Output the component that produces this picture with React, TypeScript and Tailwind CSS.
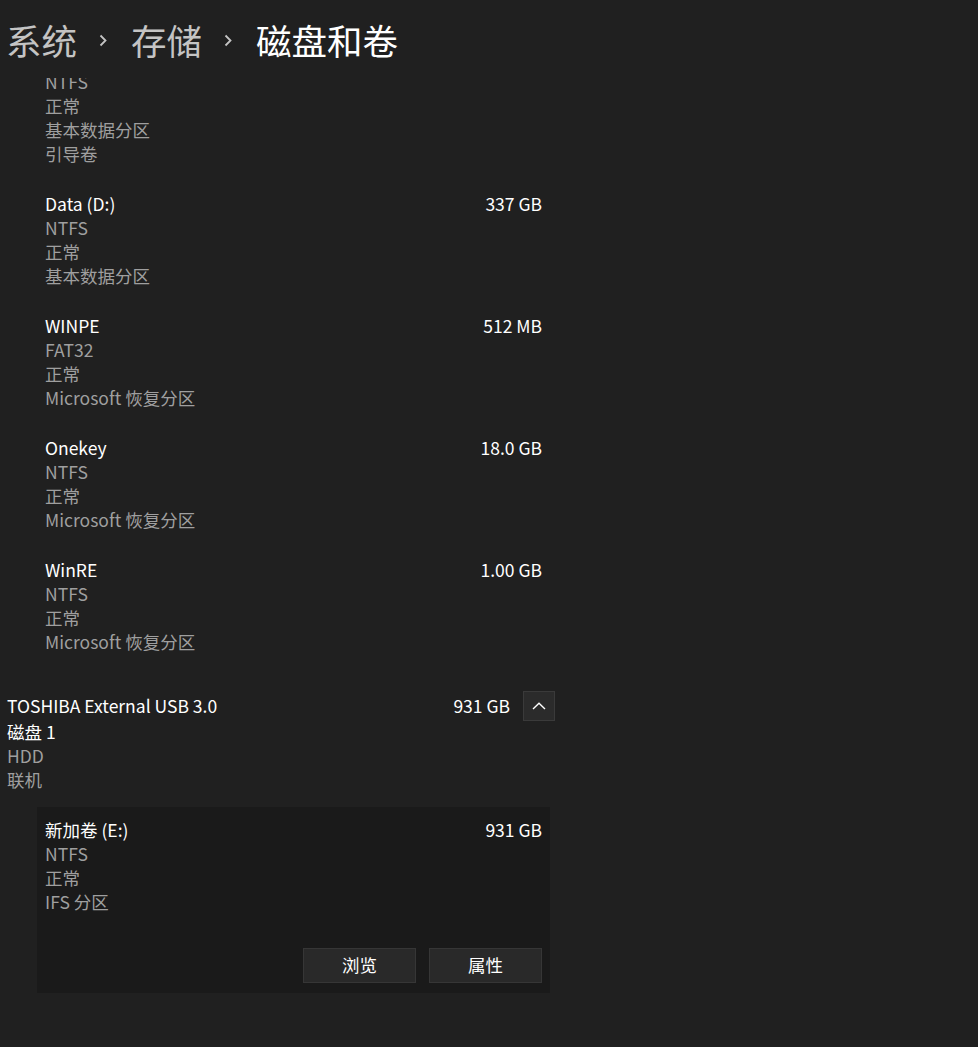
import React from 'react';

type Volume = {
  name: string;
  size?: string;
  lines: string[];
};

const VOLUMES: Volume[] = [
  { name: '', lines: ['NTFS', '正常', '基本数据分区', '引导卷'] },
  { name: 'Data (D:)', size: '337 GB', lines: ['NTFS', '正常', '基本数据分区'] },
  { name: 'WINPE', size: '512 MB', lines: ['FAT32', '正常', 'Microsoft 恢复分区'] },
  { name: 'Onekey', size: '18.0 GB', lines: ['NTFS', '正常', 'Microsoft 恢复分区'] },
  { name: 'WinRE', size: '1.00 GB', lines: ['NTFS', '正常', 'Microsoft 恢复分区'] },
];

function Crumb() {
  return (
    <svg width="10" height="15" viewBox="0 0 10 15" className="ml-[21px] mr-[23px] mt-[2px] shrink-0">
      <path d="M2.5 2.5 L7.5 7.5 L2.5 12.5" fill="none" stroke="#c4c4c4" strokeWidth="1.8" />
    </svg>
  );
}

function VolumeBlock({ v }: { v: Volume }) {
  return (
    <div className="px-2">
      <div className="flex justify-between h-6 leading-6 text-white">
        <span>{v.name}</span>
        <span>{v.size}</span>
      </div>
      {v.lines.map((l, i) => (
        <div key={i} className="h-6 leading-6 text-[#9f9f9f]">{l}</div>
      ))}
    </div>
  );
}

export default function App() {
  return (
    <div className="w-[978px] h-[1047px] bg-[#202020] overflow-hidden flex flex-col font-['Noto_Sans_CJK_SC','Liberation_Sans',sans-serif] text-[17.5px]">
      <div className="h-[78px] shrink-0 flex items-center pl-[6px] pt-[1px] text-[35.5px] leading-none">
        <span className="text-[#c4c4c4]">系统</span>
        <Crumb />
        <span className="text-[#c4c4c4]">存储</span>
        <Crumb />
        <span className="text-white">磁盘和卷</span>
      </div>

      <div className="flex-1 overflow-hidden">
        <div className="-mt-[32px]">
          <div className="ml-[37px] w-[513px] flex flex-col gap-[26px]">
            {VOLUMES.map((v, i) => (
              <VolumeBlock key={i} v={v} />
            ))}
          </div>

          <div className="mt-[38px] pl-[7px] w-[555px]">
            <div className="flex items-center justify-between h-[28px]">
              <span className="text-white">TOSHIBA External USB 3.0</span>
              <div className="flex items-center gap-[13px]">
                <span className="text-white">931 GB</span>
                <button className="w-[32px] h-[30px] flex items-center justify-center bg-[#2b2b2b] border border-[#3a3a3a]">
                  <svg width="14" height="8" viewBox="0 0 14 8">
                    <path d="M1 7 L7 1.2 L13 7" fill="none" stroke="#ffffff" strokeWidth="1.4" />
                  </svg>
                </button>
              </div>
            </div>
            <div className="h-6 leading-6 text-white">磁盘 1</div>
            <div className="h-6 leading-6 text-[#9f9f9f]">HDD</div>
            <div className="h-6 leading-6 text-[#9f9f9f]">联机</div>
          </div>

          <div className="mt-[15px] ml-[37px] w-[513px] bg-[#1a1a1a] pt-[11px] pb-[10px]">
            <VolumeBlock v={{ name: '新加卷 (E:)', size: '931 GB', lines: ['NTFS', '正常', 'IFS 分区'] }} />
            <div className="mt-[34px] px-2 flex justify-end gap-[13px]">
              <button className="w-[113px] h-[35px] bg-[#292929] border border-[#363636] text-white">浏览</button>
              <button className="w-[113px] h-[35px] bg-[#292929] border border-[#363636] text-white">属性</button>
            </div>
          </div>
        </div>
      </div>
    </div>
  );
}
